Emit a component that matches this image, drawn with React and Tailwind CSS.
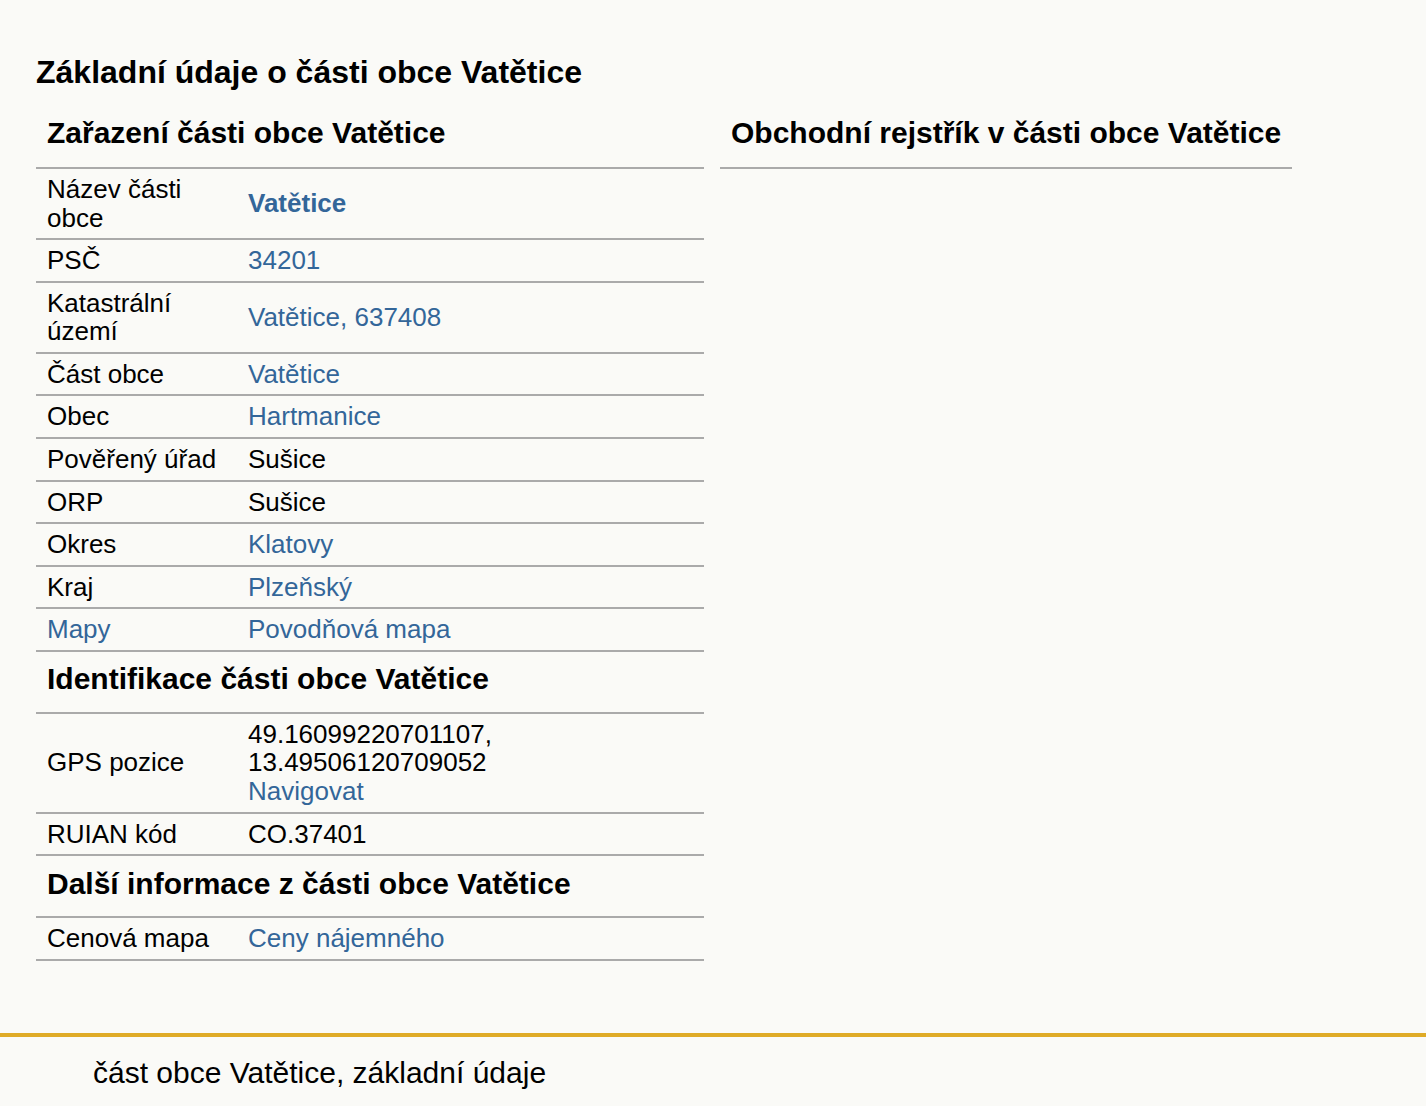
import React from "react";

const L = "text-[#336699]";

function RowC({ label, children, labelLink = false }) {
  return (
    <div className="flex items-center border-b-2 border-[#aaaaaa] py-[6.05px] text-[26px] leading-[28.5px]">
      <div className={`w-[201px] shrink-0 px-[11px] ${labelLink ? L : ""}`}>{label}</div>
      <div className="flex-1 px-[11px]">{children}</div>
    </div>
  );
}

function Heading({ children, first = false }) {
  return (
    <div
      className={`whitespace-nowrap border-b-2 border-[#aaaaaa] px-[11px] text-[30px] font-bold leading-[34.5px] ${
        first ? "pt-0 pb-[16.5px]" : "pt-[10.5px] pb-[15px]"
      }`}
    >
      {children}
    </div>
  );
}

export default function App() {
  return (
    <div
      className="min-h-[1106px] bg-[#fafaf7] text-black"
      style={{ fontFamily: '"Liberation Sans", Arial, sans-serif' }}
    >
      <div className="pl-[36px] pt-[54px]">
        <h1 className="text-[32px] font-bold leading-[37px]">
          Základní údaje o části obce Vatětice
        </h1>
        <div className="mt-[25px] flex gap-[16px] items-start">
          <div className="w-[668px] shrink-0">
            <Heading first>Zařazení části obce Vatětice</Heading>
            <RowC label="Název části obce">
              <span className={`${L} font-bold`}>Vatětice</span>
            </RowC>
            <RowC label="PSČ">
              <span className={L}>34201</span>
            </RowC>
            <RowC label="Katastrální území">
              <span className={L}>Vatětice, 637408</span>
            </RowC>
            <RowC label="Část obce">
              <span className={L}>Vatětice</span>
            </RowC>
            <RowC label="Obec">
              <span className={L}>Hartmanice</span>
            </RowC>
            <RowC label="Pověřený úřad">Sušice</RowC>
            <RowC label="ORP">Sušice</RowC>
            <RowC label="Okres">
              <span className={L}>Klatovy</span>
            </RowC>
            <RowC label="Kraj">
              <span className={L}>Plzeňský</span>
            </RowC>
            <RowC label="Mapy" labelLink>
              <span className={L}>Povodňová mapa</span>
            </RowC>
            <Heading>Identifikace části obce Vatětice</Heading>
            <RowC label="GPS pozice">
              <div>49.16099220701107,</div>
              <div>13.49506120709052</div>
              <div className={L}>Navigovat</div>
            </RowC>
            <RowC label="RUIAN kód">CO.37401</RowC>
            <Heading>Další informace z části obce Vatětice</Heading>
            <RowC label="Cenová mapa">
              <span className={L}>Ceny nájemného</span>
            </RowC>
          </div>
          <div className="w-[572px] shrink-0">
            <Heading first>Obchodní rejstřík v části obce Vatětice</Heading>
          </div>
        </div>
      </div>
      <div className="mt-[72px] border-t-4 border-[#dfab27] pl-[93px] pt-[19px] pb-[40px] text-[30px] leading-[34.5px]">
        část obce Vatětice, základní údaje
      </div>
    </div>
  );
}
